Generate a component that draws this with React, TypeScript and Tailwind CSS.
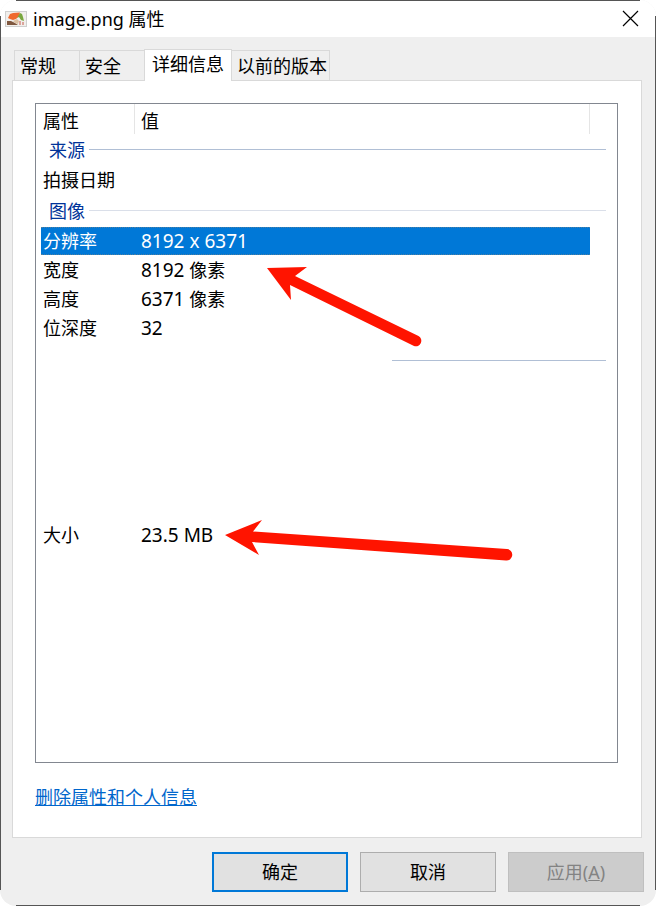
import clsx from "clsx";

const tabs = [
    { label: "常规", width: "w-[66px]" },
    { label: "安全", width: "w-[66px]" },
    { label: "详细信息", width: "w-[88px]", active: true },
    { label: "以前的版本", width: "w-[99px]" },
];

function FileIcon() {
    return (
        <svg width="22" height="16" viewBox="0 0 22 16" aria-hidden="true">
            <rect x="0.5" y="0.5" width="21" height="15" fill="#f1efec" stroke="#cfcfcf" />
            <path d="M3 7 L5 3 L8 2 L15 1.500 L14 5 L11 8 L8 9 L5 8 Z" fill="#f0692f" />
            <path d="M15 2 L17 3 L18 6 L19 10 L16 9 L14 6 L12 7 Z" fill="#79a840" />
            <path d="M2 10 L6 10 L10 12 L13 14 L2 14 Z" fill="#80583f" />
            <path d="M8 10 L12 8 L14 10 L13 13 L10 12 Z" fill="#dcc0a2" />
            <path d="M15 10 L15 14 M18 11 L18 14" stroke="#c55a4c" strokeWidth="1" />
        </svg>
    );
}

function TitleBar() {
    return (
        <header className="flex h-[37px] items-center justify-between bg-white pl-[5px] pr-[17px]">
            <div className="flex items-center gap-1.5">
                <FileIcon />
                <h1>image.png 属性</h1>
            </div>
            <button type="button" aria-label="关闭">
                <svg width="17" height="17" viewBox="0 0 17 17" stroke="#000" strokeWidth="1.2">
                    <path d="M1 1 L16 16 M16 1 L1 16" />
                </svg>
            </button>
        </header>
    );
}

function Tabs() {
    return (
        <nav role="tablist" className="flex items-end pl-0.5">
            {tabs.map((tab) => (
                <button
                    key={tab.label}
                    type="button"
                    role="tab"
                    aria-selected={!!tab.active}
                    className={clsx(
                        "-mr-px shrink-0 border border-b-0 border-[#d9d9d9] text-left",
                        tab.width,
                        tab.active ? "relative -mb-px h-8 bg-white pb-1 pl-[7px]" : "h-[30px] bg-[#efefef] pl-[5px]"
                    )}
                >
                    {tab.label}
                </button>
            ))}
        </nav>
    );
}

function GroupRow({ label, light }: { label: string; light?: boolean }) {
    return (
        <tr className={clsx("text-[#003399]", light ? "h-[33px]" : "h-[31px]")}>
            <th colSpan={3} scope="colgroup" className="pl-2 text-left font-normal">
                <div className="flex items-center gap-1">
                    {label}
                    <span className={clsx("h-px flex-1", light ? "bg-[#dadfe9]" : "bg-[#b0bfd5]")} />
                </div>
            </th>
        </tr>
    );
}

function Row({ name, value, unit, selected }: { name: string; value?: string; unit?: string; selected?: boolean }) {
    const cell = selected && "border-y border-dotted border-[#4f7f9f] bg-[#0078d7]";

    return (
        <tr className={clsx(selected ? "h-7 text-white" : "h-[29px]")}>
            <th scope="row" className={clsx("pl-0.5 text-left font-normal", cell)}>
                {name}
            </th>
            <td className={clsx("pl-1.5 text-[19px]", cell)}>
                {value}
                {unit && <span className="text-[18px]"> {unit}</span>}
            </td>
            <td />
        </tr>
    );
}

function Arrows() {
    return (
        <>
            <svg className="absolute left-[231px] top-[163px]" width="156" height="82" fill="#ff1400" aria-hidden="true">
                <path d="M0 1 L40 0 L28 9 L151.500 69 A5.500 5.500 0 0 1 147 79 L23 18 L24 33 Z" />
            </svg>
            <svg className="absolute left-[189px] top-[416px]" width="289" height="42" fill="#ff1400" aria-hidden="true">
                <path d="M0 15 L37 0 L28 11.500 L282 29 A5.600 5.600 0 0 1 281 40.500 L27 22 L34 35 Z" />
            </svg>
        </>
    );
}

function DetailsList() {
    return (
        <div className="relative h-[660px] border border-[#828790] bg-white pl-[5px] pr-[11px]">
            <table className="w-full table-fixed border-separate border-spacing-0">
                <colgroup>
                    <col className="w-[94px]" />
                    <col />
                    <col className="w-4" />
                </colgroup>
                <thead>
                    <tr className="h-[30px]">
                        <th scope="col" className="border-r border-[#e5e5e5] pl-0.5 pt-1 text-left font-normal">属性</th>
                        <th scope="col" className="border-r border-[#e5e5e5] pl-1.5 pt-1 text-left font-normal">值</th>
                        <td />
                    </tr>
                </thead>
                <tbody>
                    <GroupRow label="来源" />
                    <Row name="拍摄日期" />
                    <GroupRow label="图像" light />
                    <Row name="分辨率" value="8192 x 6371" selected />
                    <Row name="宽度" value="8192" unit="像素" />
                    <Row name="高度" value="6371" unit="像素" />
                    <Row name="位深度" value="32" />
                    <tr className="h-[178px] align-top">
                        <td colSpan={3} className="pt-[18px]">
                            <div className="ml-auto h-px w-[214px] bg-[#b0bfd5]" />
                        </td>
                    </tr>
                    <Row name="大小" value="23.5 MB" />
                </tbody>
            </table>
            <Arrows />
        </div>
    );
}

function Footer() {
    return (
        <footer className="flex justify-end gap-3 py-3.5 pr-3">
            <button type="button" className="h-10 w-[136px] border-2 border-[#0078d7] bg-[#e1e1e1]">
                确定
            </button>
            <button type="button" className="h-10 w-[136px] border border-[#adadad] bg-[#e1e1e1]">
                取消
            </button>
            <button type="button" disabled className="h-10 w-[136px] border border-[#bfbfbf] bg-[#cccccc] text-[#838383]">
                应用(<span className="underline">A</span>)
            </button>
        </footer>
    );
}

export default function App() {
    return (
        <div className="min-h-screen bg-white font-['Noto_Sans','Noto_Sans_CJK_SC',sans-serif] text-[18px] leading-6 text-black">
            <div className="relative flex min-h-screen flex-col overflow-hidden rounded-2xl bg-[#efefef]">
                <TitleBar />
                <main className="flex-1 pl-3 pr-3.5 pt-3">
                    <Tabs />
                    <section className="border border-[#d9d9d9] bg-white pb-7 pl-[22px] pr-[23px] pt-[22px]">
                        <DetailsList />
                        <a href="#" className="mt-[22px] inline-block text-[#0066cc] underline">
                            删除属性和个人信息
                        </a>
                    </section>
                </main>
                <Footer />
                <div className="absolute inset-x-4 top-0 h-px bg-[#555]" />
                <div className="absolute inset-x-4 bottom-0 h-px bg-[#555]" />
                <div className="absolute inset-y-4 left-0 w-px bg-[#555]" />
                <div className="absolute inset-y-4 right-0 w-px bg-[#555]" />
            </div>
        </div>
    );
}
